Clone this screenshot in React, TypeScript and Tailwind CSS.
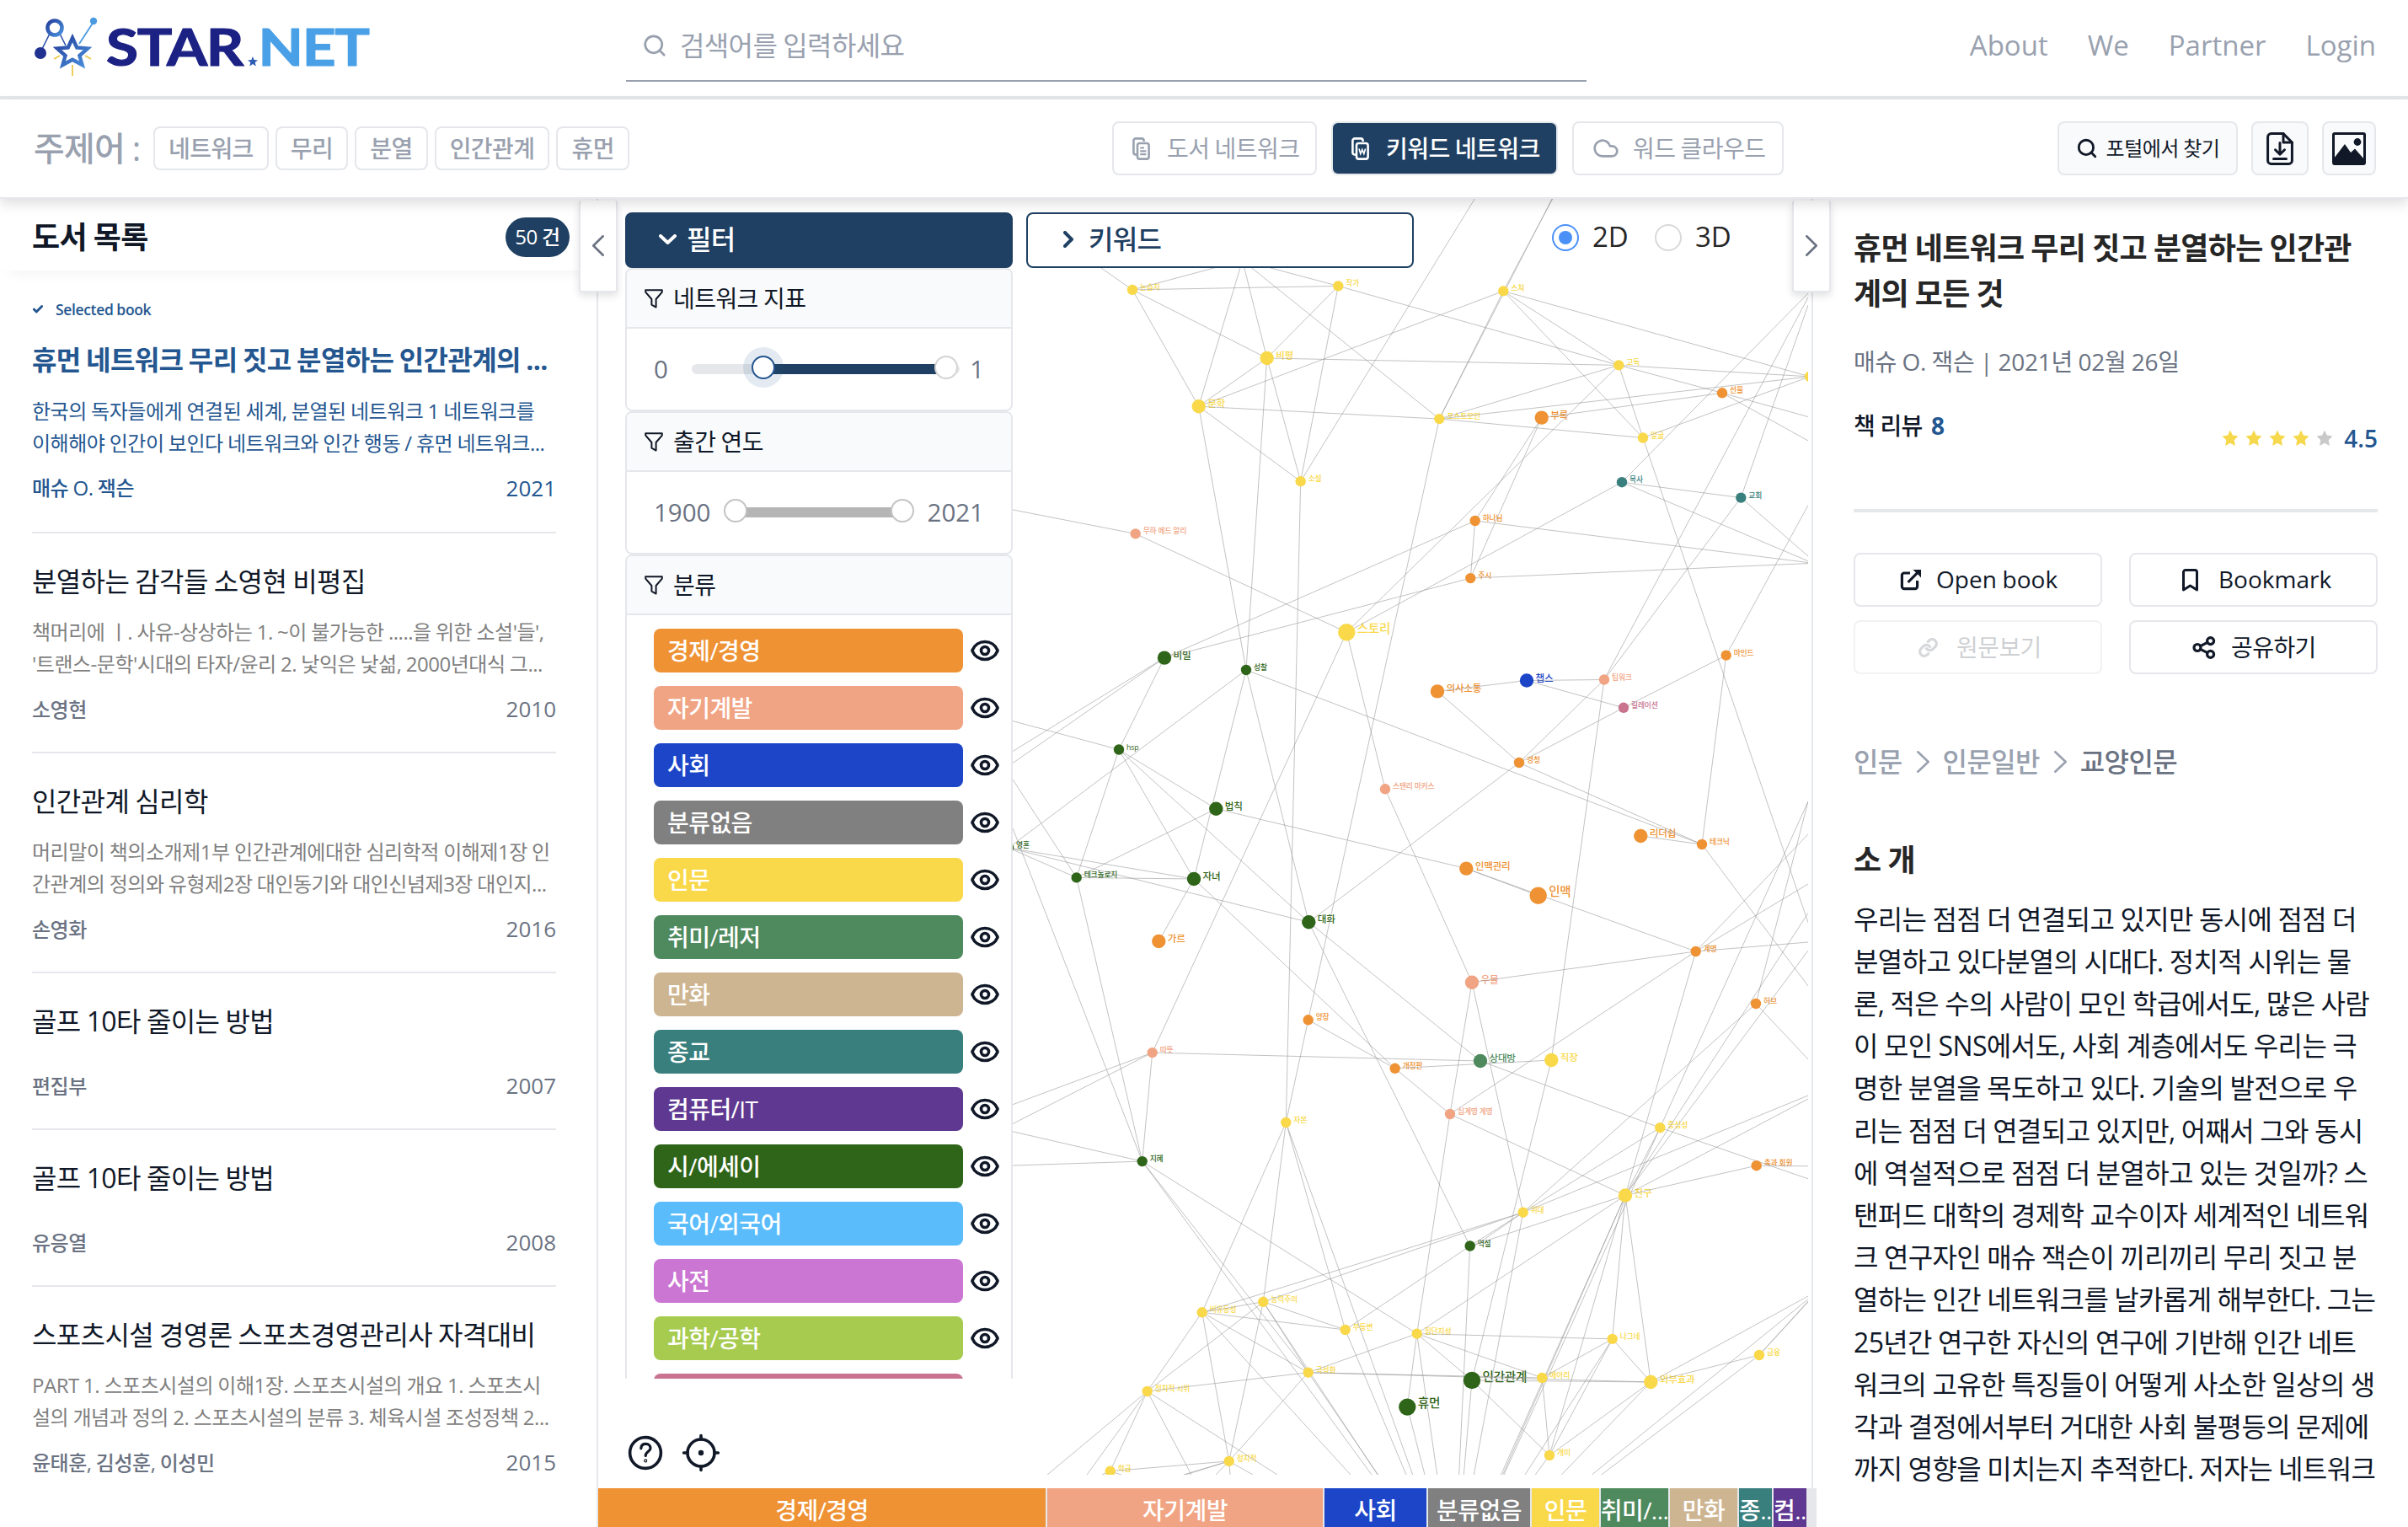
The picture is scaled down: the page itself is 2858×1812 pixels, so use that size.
import React from "react";
import { Search, Cloud, Eye, Check } from "lucide-react";

type Pt = [number, number];

const C = {
  o: "#ee9234",
  s: "#f1a483",
  b: "#1c45c8",
  y: "#f9d84a",
  g: "#2f6518",
  m: "#4e8a5e",
  t: "#397f7e",
  r: "#c9738f",
};

/* id, label, x, y, radius, colour */
const NODES: [string, string, number, number, number, keyof typeof C][] = [
  ["nsj", "논습지", 1344, 343.9, 6, "y"],
  ["jg", "작가", 1588.3, 339.4, 6, "y"],
  ["bp", "비평", 1503.7, 425, 8, "y"],
  ["mh", "문학", 1422.7, 482.2, 8, "y"],
  ["ss", "소설", 1543.7, 571.2, 6, "y"],
  ["mu", "무하 메드 알리", 1347.7, 633.4, 6, "s"],
  ["st", "스토리", 1598.3, 750.3, 10, "y"],
  ["bm", "비밀", 1382, 780.6, 8, "g"],
  ["sc", "성찰", 1479, 795, 6, "g"],
  ["hsp", "hsp", 1328, 889.5, 6, "g"],
  ["bc", "법칙", 1443.3, 959.7, 8, "g"],
  ["smk", "스탠리 마커스", 1644, 936.3, 6, "s"],
  ["yh", "영혼", 1197, 1006, 6, "g"],
  ["sj", "스쳐", 1784.3, 345.4, 6, "y"],
  ["gd", "고독", 1921.3, 433.4, 6, "y"],
  ["sm", "선물", 2044, 466.3, 6, "o"],
  ["ry", "", 2148, 446.9, 6, "y"],
  ["pm", "포스트모던", 1708.3, 497.1, 6, "y"],
  ["br", "부록", 1829.7, 495.6, 8, "o"],
  ["eg", "얼굴", 1950, 519.5, 6, "y"],
  ["ms", "목사", 1925, 572.2, 6, "t"],
  ["gh", "교회", 2066.3, 590.6, 6, "t"],
  ["hn", "하나님", 1750.7, 618, 6, "o"],
  ["js", "주시", 1745.3, 686.1, 6, "o"],
  ["ro", "", 2152, 668.3, 6, "o"],
  ["mi", "마인드", 2048.7, 777.6, 6, "o"],
  ["cs", "챕스", 1812, 807.5, 8, "b"],
  ["tw", "팀워크", 1904, 806.5, 6, "s"],
  ["us", "의사소통", 1706, 820.4, 8, "o"],
  ["rl", "릴레이션", 1927, 839.8, 6, "r"],
  ["gc", "경청", 1803, 905, 6, "o"],
  ["ld", "리더쉽", 1947.3, 992, 8, "o"],
  ["tn", "테크닉", 2020, 1002, 6, "o"],
  ["tk", "테크놀로지", 1277.7, 1041.4, 6, "g"],
  ["jn", "자녀", 1417, 1043, 8, "g"],
  ["dh", "대화", 1553.3, 1094.3, 8, "g"],
  ["gr", "가르", 1375.3, 1117, 8, "o"],
  ["yj", "양장", 1552.7, 1210.3, 6, "o"],
  ["tt", "따뜻", 1367.7, 1249.1, 6, "s"],
  ["gj", "개정판", 1655.7, 1267.8, 6, "o"],
  ["jb", "자본", 1526.3, 1332, 6, "y"],
  ["jh", "지혜", 1355.7, 1378.1, 6, "g"],
  ["nr", "능력주의", 1499.3, 1544.8, 6, "y"],
  ["by", "비유동성", 1426.7, 1557.3, 6, "y"],
  ["bd", "부등변", 1596.7, 1578, 6, "y"],
  ["gs", "극성화", 1552.7, 1628.7, 6, "y"],
  ["jw", "정치적 시위", 1361.7, 1651, 6, "y"],
  ["hm", "휴먼", 1670.3, 1669.6, 10, "g"],
  ["jj", "정치적", 1458.7, 1733.9, 6, "y"],
  ["hg", "학급", 1317.7, 1745.8, 6, "y"],
  ["im", "인맥관리", 1740.3, 1030.6, 8, "o"],
  ["in", "인맥", 1825.7, 1062.7, 10, "o"],
  ["gm", "계명", 2012.7, 1129, 6, "o"],
  ["um", "우물", 1747, 1165.7, 8, "s"],
  ["hb", "허브", 2084, 1191, 6, "o"],
  ["sd", "상대방", 1757, 1259, 8, "m"],
  ["jk", "직장", 1841.3, 1258, 8, "y"],
  ["sg", "십계명 계명", 1721, 1322, 6, "s"],
  ["jc", "중심성", 1970.3, 1338.2, 6, "y"],
  ["ck", "촉과 회원", 2084.7, 1383.2, 6, "o"],
  ["cg", "친구", 1929, 1418.5, 8, "y"],
  ["wd", "위대", 1807.7, 1438.7, 6, "y"],
  ["ys", "역설", 1744.7, 1478.5, 6, "g"],
  ["jd", "집단지성", 1681.7, 1582.6, 6, "y"],
  ["ng", "나그네", 1913.7, 1588.9, 6, "y"],
  ["gy", "금융", 2088, 1608, 6, "y"],
  ["ma", "메아리", 1830.3, 1635, 6, "y"],
  ["ig", "인간관계", 1747, 1638, 10, "g"],
  ["ob", "외부효과", 1959.3, 1640, 8, "y"],
  ["gi", "개미", 1839, 1727, 6, "y"],
];

const EDGES = `nsj jg;nsj bp;nsj mh;jg bp;jg ss;jg gd;bp mh;bp ss;bp sc;bp gd;mh sj;mh pm;mh ss;mh sc;
nsj 1307,318;nsj 1474.6,309;jg 1474.6,309;bp 1474.6,309;mh 1474.6,309;pm 1474.6,309;
ss 1754,230;ss jb;mu 1200,604.5;mu st;st gd;st ms;bm hn;bm js;bm 1202,891.5;bm 1202,905.5;bm hsp;
sc yh;sc jn;sc tn;sc dh;st tt;st smk;hsp 1200,855;hsp tk;hsp jn;hsp dh;hsp bc;bc tk;bc im;smk um;pm yj;gc dh;
tk 1202,925;jh 1202,983;yh tk;yh jn;yh dh;tk jn;sj gd;sj eg;sj ry;sj pm;sj 1846,230;pm 1845,230;gd ry;gd sm;gd pm;gd eg;
eg 2146,1094.8;sm 2146,494.6;sm 2146,523;sm br;pm ry;pm eg;eg ry;br hn;br js;hn js;hn ro;js ro;ms gh;ms ro;ms 2150,344;
gh 2146,660;gh 2146,362;gh tw;tw 2146,353;mi 2146,599.6;mi rl;mi tn;cs us;cs tw;cs rl;tw gc;rl gc;us gc;tw jk;gc tn;ld tn;
jc 2146,951;hb 2146,951;gm 2146,990;tn 2146,1170;im in;im gm;gm 2146,1049;gm 2146,1118;gm um;gm sg;gm cg;hb 2146,1257;
hb wd;um sg;sg jd;um wd;jk ig;gj jk;tt sd;dh sd;sd jc;jc 2146,1398.8;jn gj;gj sg;dh ys;yj gj;yj jb;sg cg;jc wd;jc cg;cg ck;
ck 2146,1383.8;cg 2146,1304;wd 2146,1300;cg 2146,1083.4;cg 2146,1128;wd ys;wd 1748,1480;wd by;wd nr;ys cg;ys bd;ys 1731.7,1750;
wd 1749.3,1750;cg jd;cg gi;cg ng;cg ob;cg 1781.5,1750;cg 1783.5,1750;jc 1785,1750;jd ng;jd ma;jd ig;jd hm;jd 1705.7,1750;
jd gs;jd jh;ng ma;ng ob;ng gi;ng 1810,1750;ob gi;ob 1853.3,1750;ob 2146,1538;ob gy;gy 2146,1544;gy 2146,1545;gy 1900.7,1750;
2146,1541.7 1889.3,1750;ma gi;ig gi;gi 1822.3,1750;gs ob;gs ma;ig ob;ig 1737.3,1750;hm 1691,1750;jb 1676.7,1750;jb bd;
bd 1669,1750;jh 1628,1750;jh gs;gs 1635.7,1750;nr gs;nr 1635,1750;by 1603,1750;by nr;by bd;by gs;by jj;by jw;by jb;nr jb;
nr bd;nr jw;nr jj;jw gs;jw hg;jw 1243,1750;jw 1290,1750;jw 1414,1750;jw 1516,1750;gs jj;hg jj;jj 1404.7,1750;jj 1407,1750;
jj 1443,1750;jj 1487,1750;jj 1460,1750;hg 1308,1750;hg 1331,1750;tt 1202,1310.7;tt 1202,1333.5;jh 1202,1342.8;jh 1202,1383;
tt jh;tk jh;jn gr`;

const byId = new Map<string, Pt>(NODES.map((n) => [n[0], [n[2], n[3]]]));
const point = (s: string): Pt => byId.get(s) ?? (s.split(",").map(Number) as Pt);
const LINES = EDGES.split(";").map((e) => e.trim().split(" ").map(point));

function Graph() {
  return (
    <svg className="absolute left-0 top-0" width="1436" height="1514" viewBox="710 236 1436 1514">
      <g fontFamily="'Open Sans','Noto Sans CJK KR',sans-serif" fontWeight="500">
        {NODES.map(([id, label, x, y, r, c]) => (
          <text
            key={id}
            x={x + (r === 6 ? 9 : r === 8 ? 10.5 : 12.5)}
            y={y + (r === 6 ? 0 : r === 8 ? 1 : 0.5)}
            fontSize={r === 6 ? 8.8 : r === 8 ? 11.6 : 14.6}
            fill={C[c]}
          >
            {label}
          </text>
        ))}
      </g>
      <g stroke="#999999" strokeOpacity="0.6" strokeWidth="1">
        {LINES.map(([a, b], i) => (
          <line key={i} x1={a[0]} y1={a[1]} x2={b[0]} y2={b[1]} />
        ))}
      </g>
      {NODES.map(([id, , x, y, r, c]) => (
        <circle key={id} cx={x} cy={y} r={r + 0.2} fill={C[c]} />
      ))}
    </svg>
  );
}

function Logo() {
  return (
    <svg width="420" height="92" viewBox="40 10 420 92" className="-ml-px block">
      <defs>
        <linearGradient id="sg" x1="0" y1="0" x2="1" y2="1">
          <stop offset="0" stopColor="#24409c" />
          <stop offset="1" stopColor="#4a90dc" />
        </linearGradient>
      </defs>
      <path d="M49 60 L60 38 M70 38 L78 54" stroke="#2a50a8" strokeWidth="1.6" />
      <path d="M94 52 L111 26" stroke="#4a9ae0" strokeWidth="1.8" />
      <circle cx="65" cy="33" r="8.5" fill="none" stroke="url(#sg)" strokeWidth="4.6" />
      <circle cx="48" cy="63" r="7" fill="#20318f" />
      <circle cx="111" cy="25" r="4.2" fill="#4a9ae0" />
      <path
        d="M86 45 L91.2 56.5 L104 57.6 L94.4 66 L97.6 77 L86 70.8 L74.4 77 L77.6 66 L68 57.6 L80.8 56.5 Z"
        fill="#fff"
        stroke="url(#sg)"
        strokeWidth="4.4"
      />
      <path d="M86 77 V90 M64 70 L71 66 M101 66 L108 70" stroke="#ecc94b" strokeWidth="1.8" />
      <g fontFamily="Lato,sans-serif" fontWeight="700" fontSize="62" strokeWidth="1.2" strokeLinejoin="round">
        <text x="126" y="78" textLength="162" lengthAdjust="spacingAndGlyphs" fill="#1c2184" stroke="#1c2184">
          STAR
        </text>
        <text x="306.5" y="78" textLength="131" lengthAdjust="spacingAndGlyphs" fill="#4aa0e6" stroke="#4aa0e6">
          NET
        </text>
      </g>
      <path d="M300 67 L301.6 71 L306 71.4 L302.7 74 L303.7 78.4 L300 76 L296.3 78.4 L297.3 74 L294 71.4 L298.4 71 Z" fill="#2c5cb4" />
    </svg>
  );
}

const CopyIcon = ({ word }: { word?: boolean }) => (
  <svg width="21" height="27" viewBox="0 0 21 27" fill="none" stroke="currentColor" strokeWidth="2.6">
    <path d="M5 20.5 H4 A2.6 2.6 0 0 1 1.4 18 V4 A2.6 2.6 0 0 1 4 1.4 H11 A2.6 2.6 0 0 1 13.6 4 V5" />
    <rect x="6" y="7" width="13.6" height="18.6" rx="2.6" />
    {word ? (
      <path d="M9 13.5 L10.8 19.5 L12.8 14.5 L14.8 19.5 L16.6 13.5" strokeWidth="1.7" />
    ) : (
      <path d="M9.2 12.5 H14 M9.2 16.3 H16.4 M9.2 20.2 H16.4" strokeWidth="2.2" />
    )}
  </svg>
);

const Funnel = () => (
  <svg width="22" height="23" viewBox="0 0 22 23" fill="none" stroke="#111827" strokeWidth="2" strokeLinejoin="round">
    <path d="M1.2 1.2 H20.8 V3.6 L13.6 12 V21.6 L8.4 18.6 V12 L1.2 3.6 Z" />
  </svg>
);

const Chevron = ({ dir, w, h, sw }: { dir: "l" | "r" | "d"; w: number; h: number; sw: number }) => (
  <svg width={w} height={h} viewBox={`0 0 ${w} ${h}`} fill="none" stroke="currentColor" strokeWidth={sw} strokeLinecap="round" strokeLinejoin="round">
    {dir === "l" && <path d={`M${w - sw / 2} ${sw / 2} L${sw / 2} ${h / 2} L${w - sw / 2} ${h - sw / 2}`} />}
    {dir === "r" && <path d={`M${sw / 2} ${sw / 2} L${w - sw / 2} ${h / 2} L${sw / 2} ${h - sw / 2}`} />}
    {dir === "d" && <path d={`M${sw / 2} ${sw / 2} L${w / 2} ${h - sw / 2} L${w - sw / 2} ${sw / 2}`} />}
  </svg>
);

const Star = ({ on }: { on: boolean }) => (
  <svg width="20" height="20" viewBox="0 0 20 20" fill={on ? "#f6d84c" : "#c9c9c9"}>
    <path d="M10 0.5 L12.9 6.6 L19.5 7.5 L14.7 12.2 L15.9 19 L10 15.8 L4.1 19 L5.3 12.2 L0.5 7.5 L7.1 6.6 Z" />
  </svg>
);

const BOOKS = [
  {
    title: "분열하는 감각들 소영현 비평집",
    desc: ["책머리에 ㅣ. 사유-상상하는 1. ~이 불가능한 .....을 위한 소설'들',", "'트랜스-문학'시대의 타자/윤리 2. 낯익은 낯섦, 2000년대식 그..."],
    author: "소영현",
    year: "2010",
  },
  {
    title: "인간관계 심리학",
    desc: ["머리말이 책의소개제1부 인간관계에대한 심리학적 이해제1장 인", "간관계의 정의와 유형제2장 대인동기와 대인신념제3장 대인지..."],
    author: "손영화",
    year: "2016",
  },
  { title: "골프 10타 줄이는 방법", desc: [], author: "편집부", year: "2007" },
  { title: "골프 10타 줄이는 방법", desc: [], author: "유응열", year: "2008" },
  {
    title: "스포츠시설 경영론 스포츠경영관리사 자격대비",
    desc: ["PART 1. 스포츠시설의 이해1장. 스포츠시설의 개요 1. 스포츠시", "설의 개념과 정의 2. 스포츠시설의 분류 3. 체육시설 조성정책 2..."],
    author: "윤태훈, 김성훈, 이성민",
    year: "2015",
  },
];

const CATS: [string, string][] = [
  ["경제/경영", "bg-[#ee9234]"],
  ["자기계발", "bg-[#f1a483]"],
  ["사회", "bg-[#1c45c8]"],
  ["분류없음", "bg-[#808080]"],
  ["인문", "bg-[#f9d84a]"],
  ["취미/레저", "bg-[#4e8a5e]"],
  ["만화", "bg-[#ceb592]"],
  ["종교", "bg-[#397f7e]"],
  ["컴퓨터/IT", "bg-[#5f3891]"],
  ["시/에세이", "bg-[#2f6518]"],
  ["국어/외국어", "bg-[#5bbcfc]"],
  ["사전", "bg-[#ca76d2]"],
  ["과학/공학", "bg-[#a6cb4f]"],
];

const BAR: [string, string][] = [
  ["경제/경영", "w-[531px] bg-[#ee9234]"],
  ["자기계발", "w-[327px] bg-[#f1a483]"],
  ["사회", "w-[121px] bg-[#1c45c8]"],
  ["분류없음", "w-[121px] bg-[#808080]"],
  ["인문", "w-[80px] bg-[#f9d84a]"],
  ["취미/...", "w-[80px] bg-[#4e8a5e]"],
  ["만화", "w-[80px] bg-[#ceb592]"],
  ["종..", "w-[39px] bg-[#397f7e]"],
  ["컴..", "w-[39px] bg-[#5f3891]"],
];

const INTRO = [
  "우리는 점점 더 연결되고 있지만 동시에 점점 더",
  "분열하고 있다분열의 시대다. 정치적 시위는 물",
  "론, 적은 수의 사람이 모인 학급에서도, 많은 사람",
  "이 모인 SNS에서도, 사회 계층에서도 우리는 극",
  "명한 분열을 목도하고 있다. 기술의 발전으로 우",
  "리는 점점 더 연결되고 있지만, 어째서 그와 동시",
  "에 역설적으로 점점 더 분열하고 있는 것일까? 스",
  "탠퍼드 대학의 경제학 교수이자 세계적인 네트워",
  "크 연구자인 매슈 잭슨이 끼리끼리 무리 짓고 분",
  "열하는 인간 네트워크를 날카롭게 해부한다. 그는",
  "25년간 연구한 자신의 연구에 기반해 인간 네트",
  "워크의 고유한 특징들이 어떻게 사소한 일상의 생",
  "각과 결정에서부터 거대한 사회 불평등의 문제에",
  "까지 영향을 미치는지 추적한다. 저자는 네트워크",
];

const ICON_BTN = "flex h-16 items-center justify-center rounded-lg border-2 border-gray-200 bg-gray-50";
const MODE_BTN = "flex h-16 items-center rounded-lg border-2 border-gray-200 pl-[22px] text-[28px]";
const ACTION = "flex h-16 items-center rounded-lg border-2 border-gray-200 text-[28px]";

function FilterSection({ title, children, open }: { title: string; children: React.ReactNode; open?: boolean }) {
  return (
    <section
      className={
        open
          ? "flex min-h-0 flex-1 flex-col overflow-hidden rounded-t-lg border-2 border-b-0 border-gray-200 bg-white"
          : "flex h-[170px] shrink-0 flex-col overflow-hidden rounded-lg border-2 border-gray-200 bg-white"
      }
    >
      <h3 className="flex h-[70px] shrink-0 items-center gap-3 border-b-2 border-gray-200 bg-gray-50 pl-[21px] text-[28px]">
        <Funnel />
        {title}
      </h3>
      {children}
    </section>
  );
}

const Knob = ({ className }: { className: string }) => (
  <span className={"absolute top-[22px] size-7 -translate-1/2 rounded-full border-2 bg-white " + className} />
);

export default function App() {
  return (
    <div className="flex h-[1812px] w-[2858px] flex-col overflow-hidden bg-white font-['Open_Sans','Noto_Sans_CJK_KR',sans-serif] text-gray-900 [&_*]:tracking-[-0.02em] [&_*]:[word-spacing:-0.018em]">
      <header className="flex h-[118px] shrink-0 items-start border-b-4 border-gray-200 pl-[41px] pr-[38px]">
        <div className="h-[114px] w-[702px] pt-[10px]">
          <Logo />
        </div>
        <div className="flex h-[97px] w-[1140px] items-center gap-[15px] border-b-2 border-gray-400 pl-[19px] pt-[13px] text-[32px] text-gray-400">
          <Search className="size-[30px]" strokeWidth={2.2} />
          <span>검색어를 입력하세요</span>
        </div>
        <nav className="ml-auto flex h-[108px] items-center gap-[47px] text-[33px] text-gray-400">
          <span className="tracking-normal!">About</span>
          <span className="tracking-normal!">We</span>
          <span className="tracking-normal!">Partner</span>
          <span className="tracking-normal!">Login</span>
        </nav>
      </header>

      <div className="relative z-20 flex h-[118px] shrink-0 items-center border-b-2 border-gray-200 bg-white pl-10 pr-[38px] shadow-[0_6px_14px_rgba(0,0,0,0.13)]">
        <div className="flex w-[1280px] items-center gap-2">
          <span className="w-[134px] text-[40px] font-medium text-gray-400">주제어 :</span>
          {["네트워크", "무리", "분열", "인간관계", "휴먼"].map((t) => (
            <span key={t} className="flex h-[52px] items-center rounded-lg border-2 border-gray-200 px-4 text-[28px] font-medium text-gray-400">
              {t}
            </span>
          ))}
        </div>
        <div className="flex gap-[17px] text-gray-400">
          <div className={MODE_BTN + " w-[243px] gap-5"}>
            <CopyIcon />
            도서 네트워크
          </div>
          <div className={MODE_BTN + " w-[269px] gap-5 bg-[#1f4062] font-medium text-white"}>
            <CopyIcon word />
            키워드 네트워크
          </div>
          <div className={MODE_BTN + " w-[251px] gap-4"}>
            <Cloud className="size-8" strokeWidth={2} />
            워드 클라우드
          </div>
        </div>
        <div className="ml-auto flex gap-4">
          <div className={ICON_BTN + " w-[214px] gap-[10px] text-[24px]"}>
            <Search className="size-[26px]" strokeWidth={2.6} />
            포털에서 찾기
          </div>
          <div className={ICON_BTN + " w-[68px]"}>
            <svg width="32" height="39" viewBox="0 0 32 39" fill="none" stroke="#111827" strokeWidth="3" strokeLinejoin="round" strokeLinecap="round">
              <path d="M20 1.6 H5.6 A4 4 0 0 0 1.6 5.6 V33.4 A4 4 0 0 0 5.6 37.4 H26.4 A4 4 0 0 0 30.4 33.4 V12 Z" />
              <path d="M20 1.6 V12 H30.4" strokeWidth="3" />
              <path d="M16 12.5 V26 M10.5 20.8 L16 26.2 L21.5 20.8 M8.5 31.6 H23.5" />
            </svg>
          </div>
          <div className={ICON_BTN + " w-16"}>
            <svg width="40" height="39" viewBox="0 0 40 39">
              <rect x="1.5" y="1.5" width="37" height="36" rx="1.5" fill="none" stroke="#111827" strokeWidth="3" />
              <circle cx="30" cy="11.5" r="4.4" fill="#111827" />
              <path d="M2 31 L15 14 L22 24 L27 19.5 L38 32 V37 H2 Z" fill="#111827" />
            </svg>
          </div>
        </div>
      </div>

      <main className="relative flex min-h-0 flex-1">
        <aside className="flex w-[710px] flex-col border-r-2 border-gray-200">
          <div className="flex h-[85px] shrink-0 items-center justify-between pb-[2px] pl-[38px] pr-8 pt-2 shadow-[0_14px_16px_-12px_rgba(0,0,0,0.06)]">
            <h2 className="text-[36px] font-bold">도서 목록</h2>
            <span className="flex h-[47px] w-[76px] items-center justify-center rounded-full bg-[#1f4062] pb-[2px] text-[24px] font-medium text-white">50 건</span>
          </div>
          <article className="mx-[38px] flex h-[312px] w-[622px] flex-col border-b-2 border-gray-200 text-[#245690]">
            <div className="mt-[34px] flex h-6 items-center gap-[14px] text-[17.5px] font-semibold">
              <Check className="size-[14px]" strokeWidth={5} />
              Selected book
            </div>
            <h3 className="mt-6 h-12 whitespace-nowrap text-[32px] font-bold leading-[48px] [word-spacing:-0.036em]!">휴먼 네트워크 무리 짓고 분열하는 인간관계의 ...</h3>
            <p className="mt-[18px] whitespace-nowrap text-[24px] leading-[37.5px]">
              한국의 독자들에게 연결된 세계, 분열된 네트워크 1 네트워크를
              <br />
              이해해야 인간이 보인다 네트워크와 인간 행동 / 휴먼 네트워크...
            </p>
            <div className="mt-[17px] flex h-9 items-center justify-between text-[24px] font-medium">
              <span>매슈 O. 잭슨</span>
              <span className="text-[26px] font-normal tracking-normal!">2021</span>
            </div>
          </article>
          {BOOKS.map((b, i) => (
            <article key={i} className="mx-[38px] w-[622px] shrink-0 border-b-2 border-gray-200 pb-[32.5px] pt-[32.5px] last:border-b-0">
              <h3 className="h-12 whitespace-nowrap text-[32px] leading-[48px]">{b.title}</h3>
              {b.desc.length > 0 && (
                <p className="mt-[17.5px] text-[24px] leading-[37.5px] text-[#808080]">
                  {b.desc.map((d) => (
                    <span key={d} className="block whitespace-nowrap">
                      {d}
                    </span>
                  ))}
                </p>
              )}
              <div className={(b.desc.length ? "mt-[17.5px]" : "mt-[35px]") + " flex h-9 items-center justify-between text-[24px] text-gray-500"}>
                <span className="font-medium">{b.author}</span>
                <span className="text-[26px] tracking-normal!">{b.year}</span>
              </div>
            </article>
          ))}
        </aside>

        <section className="relative flex w-[1440px] flex-col">
          <div className="relative h-[1530px] shrink-0">
            <Graph />
            <div className="relative flex items-start pl-8 pt-4">
              <div className="flex h-[1384px] w-[460px] flex-col">
                <h2 className="flex h-[66px] shrink-0 items-center gap-3 rounded-lg bg-[#1f4062] pb-[2px] pl-10 text-[32px] font-medium text-white">
                  <Chevron dir="d" w={21} h={12} sw={4} />
                  필터
                </h2>
                <FilterSection title="네트워크 지표">
                  <div className="flex h-24 items-center pl-8 pr-8 text-[29.5px] text-gray-500">
                    <span className="w-[45px] tracking-normal!">0</span>
                    <div className="relative h-12 w-[318px]">
                      <div className="absolute left-0 top-[18px] h-3 w-full rounded-full bg-gray-200" />
                      <div className="absolute left-[85px] top-[18px] h-3 w-[217px] bg-[#1f4062]" />
                      <span className="absolute left-[85px] top-[22px] size-12 -translate-1/2 rounded-full bg-[#1f4f8a]/12" />
                      <Knob className="left-[85px] border-[#245690]" />
                      <Knob className="left-[302px] border-[#d4d4d4]" />
                    </div>
                    <span className="ml-auto tracking-normal!">1</span>
                  </div>
                </FilterSection>
                <FilterSection title="출간 연도">
                  <div className="flex h-24 items-center pl-8 pr-8 text-[29.5px] text-gray-500">
                    <span className="w-[97px] tracking-normal!">1900</span>
                    <div className="relative h-12 w-[198px]">
                      <div className="absolute left-0 top-[18px] h-3 w-full bg-[#b5b5b5]" />
                      <Knob className="left-0 border-[#c4c4c4]" />
                      <Knob className="left-full border-[#c4c4c4]" />
                    </div>
                    <span className="ml-auto tracking-normal!">2021</span>
                  </div>
                </FilterSection>
                <FilterSection title="분류" open>
                  <ul className="flex flex-col gap-4 overflow-hidden pl-8 pt-4">
                    {CATS.map(([name, bg]) => (
                      <li key={name} className="flex shrink-0 items-center gap-2">
                        <span className={"flex h-[52px] w-[367px] items-center rounded-lg pl-4 text-[28px] font-medium text-white " + bg}>{name}</span>
                        <Eye className="h-9 w-9" strokeWidth={2.4} />
                      </li>
                    ))}
                    <li className="h-[52px] w-[367px] shrink-0 rounded-lg bg-[#c9738f]" />
                  </ul>
                </FilterSection>
              </div>
              <h2 className="ml-4 flex h-[66px] w-[460px] items-center gap-[18px] rounded-lg border-[2.5px] border-[#1f4062] bg-white pb-[2px] pl-[42px] text-[32px] font-medium text-[#1f4062]">
                <Chevron dir="r" w={12} h={20} sw={4} />
                키워드
              </h2>
              <div className="ml-[164px] flex h-[60px] items-center text-[33px] font-medium text-[#262626]">
                <span className="flex size-8 items-center justify-center rounded-full border-2 border-[#4a90f7] bg-white">
                  <span className="size-4 rounded-full bg-[#4a90f7]" />
                </span>
                <span className="ml-4 w-[74px] pb-[2px] tracking-normal!">2D</span>
                <span className="size-8 rounded-full border-2 border-[#d9d9d9] bg-white" />
                <span className="ml-4 pb-[2px] tracking-normal!">3D</span>
              </div>
            </div>
            <div className="absolute left-[35px] top-[1465px] flex gap-[22px]">
              <svg width="42" height="46" viewBox="0 0 42 46" fill="none" stroke="#111827" strokeWidth="3.6" strokeLinecap="round">
                <circle cx="21" cy="23" r="18.4" />
                <path d="M15.8 17.8 C16 13.4 19 12.4 21.4 12.4 C25 12.4 27 14.6 27 17.4 C27 21.6 21.2 21.6 21.2 26.4" strokeWidth="3.2" />
                <circle cx="21.2" cy="32.4" r="0.6" strokeWidth="3" />
              </svg>
              <svg width="46" height="46" viewBox="0 0 46 46" fill="none" stroke="#111827" strokeWidth="3.6" strokeLinecap="round">
                <circle cx="23" cy="23" r="16" />
                <path d="M23 2.6 V7 M23 39 V43.4 M2.6 23 H7 M39 23 H43.4" />
                <circle cx="23" cy="23" r="3.2" fill="#111827" stroke="none" />
              </svg>
            </div>
          </div>
          <div className="relative z-10 flex h-[46px] w-[1446px] gap-[2px] bg-gray-200 text-[28px] font-medium text-white">
            {BAR.map(([name, cls]) => (
              <span key={name} className={"flex shrink-0 items-center justify-center overflow-hidden whitespace-nowrap pt-[5px] " + cls}>
                {name}
              </span>
            ))}
          </div>
        </section>

        <aside className="flex h-[1530px] w-[708px] flex-col overflow-hidden border-l-2 border-gray-200 pl-12 pr-9 pt-8">
          <h1 className="shrink-0 whitespace-nowrap text-[36px] font-bold leading-[54px] text-[#262626]">
            휴먼 네트워크 무리 짓고 분열하는 인간관
            <br />
            계의 모든 것
          </h1>
          <p className="mt-[33px] h-[40px] text-[28px] leading-[40px] tracking-[-0.01em]! text-gray-500">매슈 O. 잭슨 | 2021년 02월 26일</p>
          <div className="mt-[36px] flex h-[60px] shrink-0 items-start justify-between text-[28px] font-medium leading-[40px]">
            <span>
              책 리뷰 <b className="ml-1 font-bold text-[#245690]">8</b>
            </span>
            <span className="mt-[15px] flex items-center gap-2">
              <Star on />
              <Star on />
              <Star on />
              <Star on />
              <Star on={false} />
              <b className="ml-[5px] font-semibold tracking-normal! text-[#245690]">4.5</b>
            </span>
          </div>
          <hr className="mt-[59px] shrink-0 border-t-4 border-gray-200" />
          <div className="mt-12 grid shrink-0 grid-cols-2 gap-x-8 gap-y-4">
            <div className={ACTION + " gap-[17px] pl-[53px]"}>
              <svg width="26" height="26" viewBox="0 0 26 26" fill="none" stroke="#111827" strokeWidth="3.2" strokeLinejoin="round">
                <path d="M12 5 H5 A2.6 2.6 0 0 0 2.4 7.6 V21 A2.6 2.6 0 0 0 5 23.6 H18 A2.6 2.6 0 0 0 20.6 21 V14" />
                <path d="M9.6 16 L22 3.4" />
                <path d="M15.4 1 H25 V10.4 L21.4 6.6 L19.4 4.8 Z" fill="#111827" stroke="none" />
              </svg>
              <span className="pb-[2px] tracking-normal!">Open book</span>
            </div>
            <div className={ACTION + " gap-6 pl-[61px]"}>
              <svg width="19" height="27" viewBox="0 0 19 27" fill="none" stroke="#111827" strokeWidth="3" strokeLinejoin="round">
                <path d="M1.5 25 V4 A2.5 2.5 0 0 1 4 1.5 H15 A2.5 2.5 0 0 1 17.5 4 V25 L9.5 20 Z" />
              </svg>
              <span className="pb-[2px] tracking-normal!">Bookmark</span>
            </div>
            <div className={ACTION + " gap-[21px] pl-[74px] text-gray-900 opacity-50 [&>*]:opacity-40"}>
              <svg width="25" height="25" viewBox="0 0 24 24" fill="none" stroke="#374151" strokeWidth="3" strokeLinecap="round">
                <path d="M10 13a5 5 0 0 0 7.5.5l3-3a5 5 0 0 0-7-7l-1.7 1.7" />
                <path d="M14 11a5 5 0 0 0-7.5-.5l-3 3a5 5 0 0 0 7 7l1.7-1.7" />
              </svg>
              <span>원문보기</span>
            </div>
            <div className={ACTION + " gap-[18px] pl-[73px]"}>
              <svg width="28" height="27" viewBox="0 0 28 27" fill="none" stroke="#111827" strokeWidth="3.2">
                <circle cx="6" cy="13.5" r="4" />
                <circle cx="21.6" cy="5.6" r="4" />
                <circle cx="21.6" cy="21.4" r="4" />
                <path d="M9.6 11.6 L18 7.4 M9.6 15.4 L18 19.6" />
              </svg>
              공유하기
            </div>
          </div>
          <div className="mt-[80px] flex h-12 shrink-0 items-center text-[32px] font-medium text-gray-400">
            인문
            <span className="ml-[17px] mr-[16px]">
              <Chevron dir="r" w={15} h={26} sw={2.6} />
            </span>
            인문일반
            <span className="ml-[17px] mr-[16px]">
              <Chevron dir="r" w={15} h={26} sw={2.6} />
            </span>
            <span className="text-gray-500">교양인문</span>
          </div>
          <h2 className="mt-[66px] h-[54px] shrink-0 text-[36px] font-bold leading-[54px] text-[#262626]">소 개</h2>
          <p className="mt-[17.5px] shrink-0 text-[32px] leading-[50.2px]">
            {INTRO.map((l) => (
              <span key={l} className="block whitespace-nowrap">
                {l}
              </span>
            ))}
          </p>
        </aside>

        <button className="absolute left-[687px] top-[2px] z-10 flex h-[109px] w-[46px] items-center justify-center rounded-[3px] border-2 border-t-0 border-gray-200 bg-white text-gray-500 shadow-[0_4px_10px_rgba(0,0,0,0.12)]">
          <Chevron dir="l" w={14} h={25} sw={2.6} />
        </button>
        <button className="absolute left-[2127px] top-[2px] z-10 flex h-[109px] w-[46px] items-center justify-center rounded-[3px] border-2 border-t-0 border-gray-200 bg-white text-gray-500 shadow-[0_4px_10px_rgba(0,0,0,0.12)]">
          <Chevron dir="r" w={14} h={25} sw={2.6} />
        </button>
      </main>
    </div>
  );
}
